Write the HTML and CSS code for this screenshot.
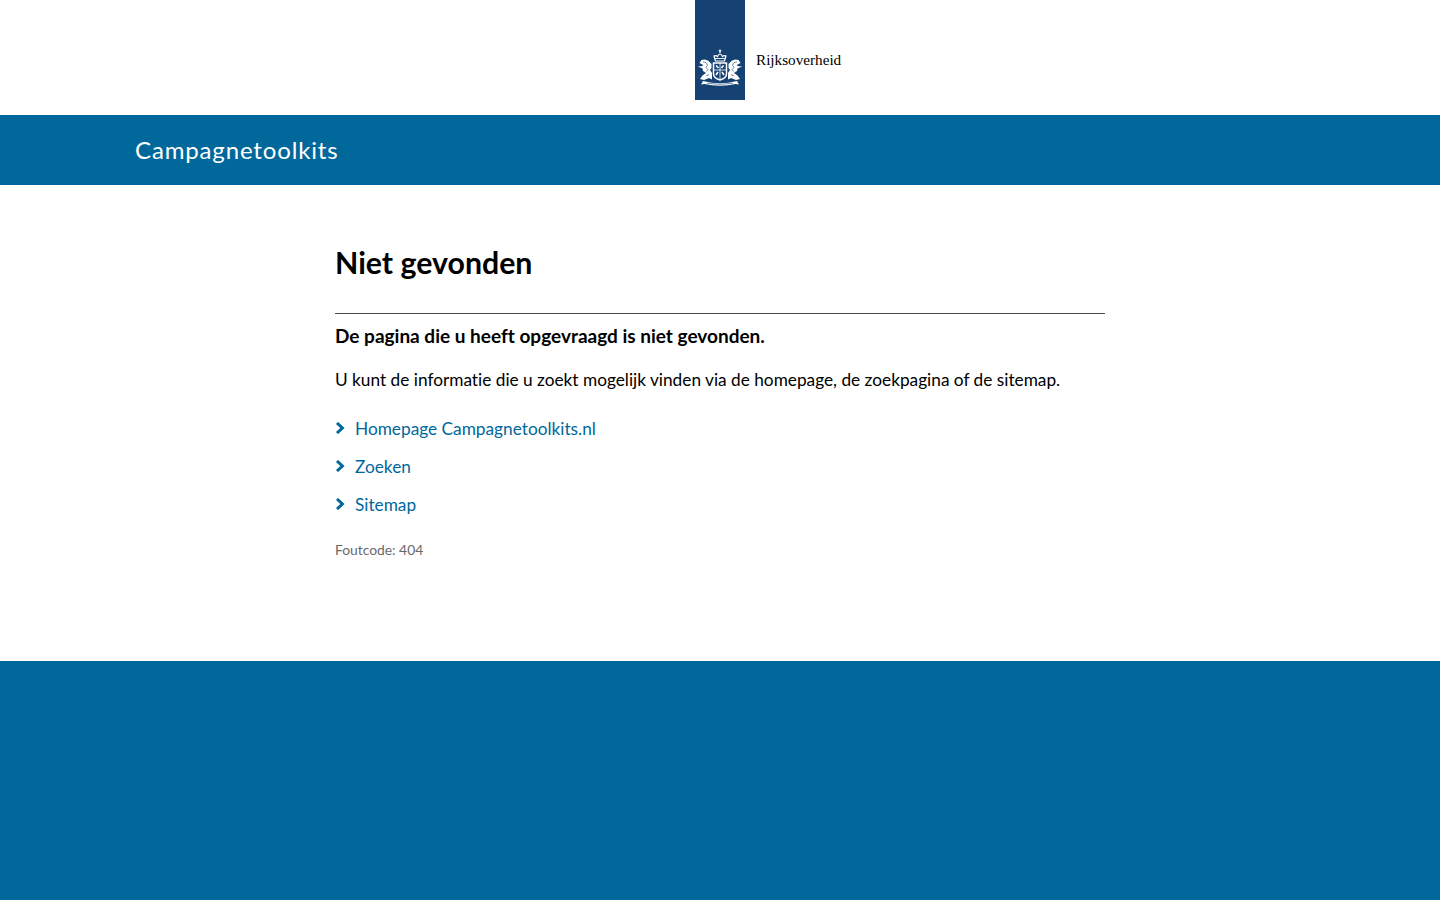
FILE: index.html
```html
<!DOCTYPE html>
<html lang="nl">
<head>
<meta charset="utf-8">
<title>Niet gevonden - Campagnetoolkits</title>
<link rel="stylesheet" href="styles.css">
</head>
<body>
<header class="top">
  <a class="logo" href="#">
    <span class="logo-block">
      <svg class="emblem" viewBox="0 0 50 45" width="50" height="45" aria-hidden="true">
        <g fill="none" stroke="#fff" stroke-width="1.200">
          <path d="M20.500 16 L19 11 Q21 10 22.500 11.500 Q25 6.500 27.500 11.500 Q29 10 31 11 L29.500 16 Z"/>
          <path d="M25 4.500 V8 M23.800 5.800 H26.200"/>
          <path d="M20 13.500 H30" stroke-width="0.900"/>
          <path d="M18.500 18 H31.500 V29 Q31.500 33 25 35 Q18.500 33 18.500 29 Z" stroke-width="1.500"/>
          <path d="M25 18 V35 M18.500 25 H31.500" stroke-width="0.800"/>
          <path d="M21 20.500 L23.500 23 M28.500 20.500 L26.500 23 M21 30 L23 27 M29 30 L27 27" stroke-width="1.600"/>
        </g>
        <g fill="#fff">
          <path d="M16.500 19 L13 15.500 L9.500 14.500 L6.500 15 L4.500 18 L7.500 19.500 L8 21 L3 21.500 L7.500 23.500 L8 26 L11 28 L7.500 30.500 L5 34 L9 35 L14 33 L17 34.500 L17 28 L15 25 L16.500 23 Z"/>
          <path d="M33.500 19 L37 15.500 L40.500 14.500 L43.500 15 L45.500 18 L42.500 19.500 L42 21 L47 21.500 L42.500 23.500 L42 26 L39 28 L42.500 30.500 L45 34 L41 35 L36 33 L33 34.500 L33 28 L35 25 L33.500 23 Z"/>
          <path d="M8 36 Q25 40.500 42 36 L44 39.500 L40.500 39 Q25 42.500 9.500 39 L6 39.500 Z"/>
        </g>
        <g fill="none" stroke="#154273" stroke-width="0.600">
          <path d="M8 17 L11 17.500 L12.500 20 L11 22.500 L13 24.500 L11.500 26.500"/>
          <path d="M42 17 L39 17.500 L37.500 20 L39 22.500 L37 24.500 L38.500 26.500"/>
          <path d="M11 31 L14 29.500 M39 31 L36 29.500"/>
          <path d="M12 38.200 Q25 40.500 38 38.200"/>
        </g>
      </svg>
    </span>
    <span class="logo-text">Rijksoverheid</span>
  </a>
</header>
<div class="site-bar"><span class="site-name">Campagnetoolkits</span></div>
<main class="content">
  <h1 class="title">Niet gevonden</h1>
  <p class="lead">De pagina die u heeft opgevraagd is niet gevonden.</p>
  <p class="body-text">U kunt de informatie die u zoekt mogelijk vinden via de homepage, de zoekpagina of de sitemap.</p>
  <ul class="links">
    <li class="link-item"><svg class="chevron" viewBox="0 0 10 12" width="10" height="12" aria-hidden="true"><path d="M2 1 L7.400 6 L2 11" fill="none" stroke="#01689b" stroke-width="3"/></svg><a href="#">Homepage Campagnetoolkits.nl</a></li>
    <li class="link-item"><svg class="chevron" viewBox="0 0 10 12" width="10" height="12" aria-hidden="true"><path d="M2 1 L7.400 6 L2 11" fill="none" stroke="#01689b" stroke-width="3"/></svg><a href="#">Zoeken</a></li>
    <li class="link-item"><svg class="chevron" viewBox="0 0 10 12" width="10" height="12" aria-hidden="true"><path d="M2 1 L7.400 6 L2 11" fill="none" stroke="#01689b" stroke-width="3"/></svg><a href="#">Sitemap</a></li>
  </ul>
  <p class="code">Foutcode: 404</p>
</main>
<footer class="foot"></footer>
</body>
</html>
```

FILE: styles.css
```css
* { box-sizing: border-box; }
html, body { margin: 0; padding: 0; }
body {
  min-height: 900px;
  display: flex;
  flex-direction: column;
  background: #fff;
  color: #000;
  font-family: Lato, "Noto Sans", sans-serif;
  font-variant-ligatures: none;
}
.top { height: 115px; padding-left: calc(50% - 25px); }
.logo { display: flex; height: 100px; color: #000; text-decoration: none; }
.logo-block {
  width: 50px;
  height: 100px;
  background: #154273;
  display: flex;
  align-items: flex-end;
  padding-bottom: 10px;
}
.emblem { display: block; }
.logo-text {
  margin-left: 11px;
  padding-top: 50px;
  font-family: "Liberation Serif", serif;
  font-size: 15.2px;
  line-height: 20px;
}
.site-bar {
  height: 70px;
  background: #01689b;
  padding-left: 135px;
  padding-bottom: 2px;
  display: flex;
  align-items: center;
}
.site-name { color: #fff; font-size: 24px; letter-spacing: 0.85px; }
.content { width: 770px; margin: 0 auto; height: 476px; padding-top: 58px; }
.title {
  margin: 0;
  height: 71px;
  border-bottom: 1px solid #4a4a4a;
  font-size: 30.3px;
  line-height: 38px;
  font-weight: 700;
}
.lead { margin: 9px 0 0; font-size: 19px; line-height: 26px; font-weight: 700; }
.body-text { margin: 18px 0 0; font-size: 17.25px; line-height: 26px; }
.links { list-style: none; margin: 16px 0 0; padding: 0; }
.link-item { display: flex; align-items: center; height: 38px; font-size: 17.25px; }
.link-item a { color: #01689b; text-decoration: none; }
.chevron { margin-right: 10px; flex: none; margin-top: -1px; }
.code { margin: 17px 0 0; font-size: 13.85px; line-height: 20px; color: #696969; }
.foot { flex: 1; background: #01689b; }
```
